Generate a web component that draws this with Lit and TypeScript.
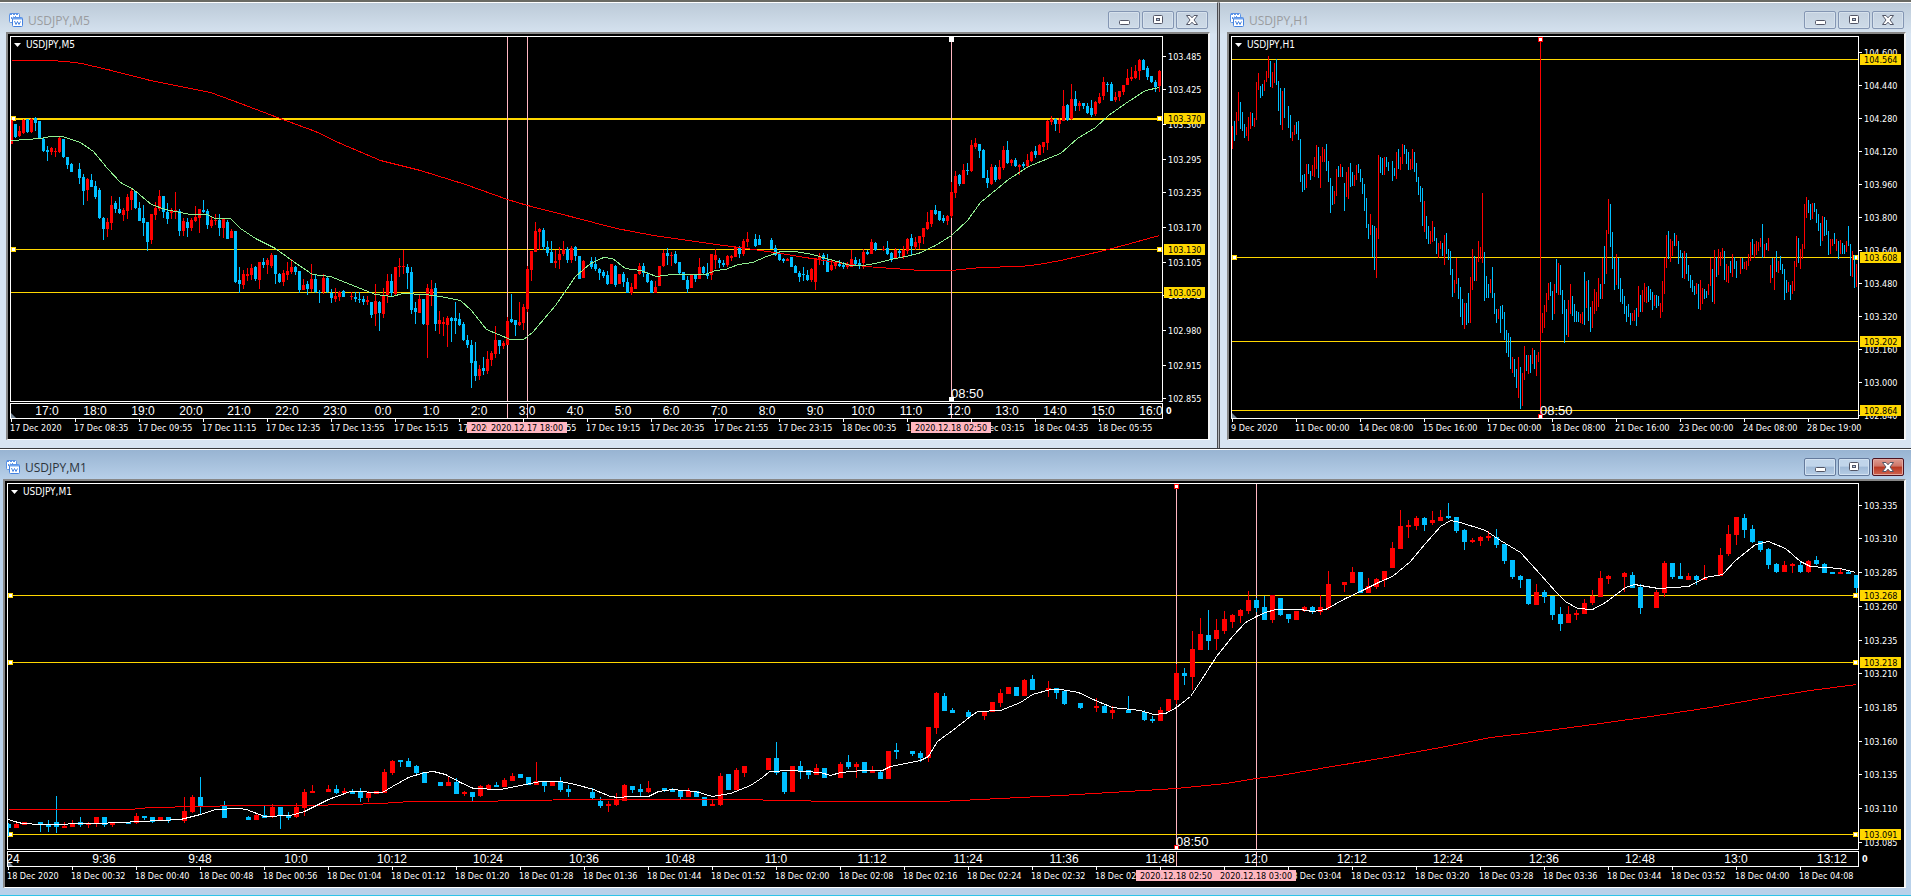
import { LitElement, html, svg, css } from "lit";
import { customElement, property } from "lit/decorators.js";
import { classMap } from "lit/directives/class-map.js";

/* ---------- price series ----------
   One entry per bar, "-" for an empty slot. The letter is the direction
   (r = up, b = down), numbers are vertical levels in thirds of a pixel. */

// colour, high, body top, body bottom, low
const M5_BARS = `
r360 360 431 431;b372 372 411 415;r378 392 408 412;r357 360 398 402;b357 358 396 398;r354 356 396 400;b350 354 370 392;b362 362 417 418;
b415 416 453 455;b438 450 456 483;r440 444 456 465;r444 453 457 471;r408 413 456 459;b417 417 471 473;b470 471 495 507;b489 492 515 516;
-;b489 507 534 552;b522 530 573 614;r534 537 570 603;b522 540 560 561;b543 558 592 597;b564 570 654 656;b651 654 687 720;
r654 666 687 711;r588 615 668 690;b603 609 627 639;b591 627 640 642;r624 630 645 663;r582 591 634 656;r567 573 600 630;b573 573 624 626;
b606 624 663 663;b615 654 668 708;b666 666 726 753;r642 642 720 732;r606 624 645 660;r570 588 628 633;b588 588 635 654;b609 635 657 672;
r624 630 638 656;r576 630 634 656;b627 633 693 708;r654 663 694 708;b654 666 684 711;r654 660 684 693;r618 650 663 667;r628 628 655 699;
b600 630 636 640;b627 633 676 687;r651 660 678 684;r642 660 664 675;b642 660 684 708;r654 657 684 713;b660 666 716 717;r687 693 713 713;
b693 693 846 848;b801 840 852 878;r810 822 855 868;r804 822 828 843;r792 803 826 840;b798 801 837 843;r786 786 840 867;b774 786 794 804;
r774 780 796 822;r760 765 798 804;b765 765 822 852;b819 822 846 848;r810 819 846 858;r786 813 824 840;r777 800 816 822;b798 800 816 826;
b813 813 870 880;r836 855 870 870;b843 852 867 885;r792 837 867 876;b822 837 876 880;b870 876 880 909;r822 834 876 882;b828 834 876 880;
b866 880 894 909;r864 888 897 906;r873 876 892 903;b870 873 890 892;-;r876 888 892 900;b876 891 896 906;b876 896 900 909;
b888 898 906 915;r888 900 906 915;b906 906 945 954;r852 903 942 978;b903 906 938 993;r864 885 942 954;r822 843 885 909;b822 843 878 888;
r801 801 882 888;r774 798 802 832;r750 798 801 822;b792 800 820 868;b801 816 930 942;b906 924 936 972;r885 897 938 938;b897 897 972 975;
r852 864 974 1074;r840 868 885 918;b850 864 972 993;r933 960 972 1001;r951 966 972 1008;r948 954 974 1041;b951 954 963 1026;b906 954 964 1002;
b939 957 974 978;b966 972 1020 1024;b1005 1020 1035 1044;b1020 1035 1089 1164;b1026 1083 1128 1143;r1095 1107 1128 1140;b1071 1104 1113 1125;r1053 1077 1113 1122;
r1053 1059 1080 1098;r978 1020 1062 1074;b1020 1020 1038 1062;r1023 1029 1038 1047;r951 963 1035 1035;b882 957 966 969;b960 960 975 1008;r906 966 975 978;
r912 921 969 990;r798 807 927 936;r753 753 810 843;r666 693 756 756;r684 687 695 750;b684 690 741 750;b723 741 759 768;b723 756 789 789;
r750 783 789 804;r741 762 780 806;r723 747 763 768;b741 747 780 790;r739 744 780 789;b738 740 768 783;b768 768 836 836;r780 783 833 833;
-;b771 783 801 808;b771 792 807 812;b803 807 819 840;b810 816 828 834;b813 825 852 855;r792 792 852 852;b795 798 855 861;
r822 822 851 851;b816 822 846 860;b834 846 879 880;r850 861 879 885;r822 822 867 868;r789 798 822 824;b789 798 820 831;b816 822 846 850;
b840 843 878 880;r843 861 880 880;r798 798 858 858;r750 759 798 802;b744 759 768 796;r756 765 769 798;b753 762 790 792;b786 786 820 822;
b816 816 840 840;b828 840 867 880;r822 825 864 864;b822 825 837 846;r774 801 837 837;b798 801 820 822;b789 819 828 837;r762 762 824 840;
r747 765 780 807;b774 780 790 804;b780 790 796 801;r765 768 796 801;r765 768 773 783;r738 742 771 771;b738 742 762 774;r717 723 762 768;
r696 717 725 742;-;b702 717 738 740;b705 717 735 735;-;-;b714 720 746 748;b735 744 765 768;
b752 759 780 783;b774 777 783 790;r774 777 784 784;b771 771 800 801;b795 798 818 820;b813 820 830 846;b800 822 826 843;b810 824 840 843;
r804 807 840 846;r774 774 846 870;r759 770 777 795;b759 765 778 795;b762 780 815 816;r780 795 810 812;r787 789 798 807;b780 793 798 800;
b786 794 802 808;r786 792 802 808;r750 777 800 801;b771 780 792 796;b777 788 798 808;r747 755 790 806;b750 755 763 766;r717 726 762 763;
b726 729 750 752;-;r738 748 750 754;b723 745 762 766;b757 759 776 786;r744 750 773 776;b747 753 760 775;r739 750 771 776;
r715 717 754 762;b702 714 738 765;r710 726 742 750;r708 708 730 748;r684 684 711 732;r636 666 687 690;r630 630 672 681;b615 630 642 645;
b633 633 660 662;b645 654 663 669;r645 648 663 675;r546 576 648 654;r513 528 578 594;b522 526 552 558;r492 510 552 552;b489 510 514 525;
r420 435 513 516;r414 429 441 447;b432 432 453 474;b447 450 533 534;b510 534 549 564;r492 501 552 555;b495 501 540 546;r480 501 537 540;
r438 450 504 510;b423 450 489 492;r477 480 489 498;b474 480 498 501;r492 495 501 525;b486 493 498 504;r462 480 498 500;r454 456 483 486;
b438 453 465 474;r432 435 465 465;r426 426 441 459;r360 363 430 450;r348 357 366 376;b354 357 372 393;r354 360 372 399;r270 318 362 363;
b312 315 360 363;r252 297 357 360;b273 297 318 333;r303 309 318 333;b309 309 318 327;b309 318 340 342;b300 324 345 351;r303 306 342 348;
r279 291 309 312;r231 246 288 300;b246 252 256 276;b246 252 303 303;r276 291 300 306;r273 273 291 303;r255 255 276 285;r207 234 255 255;
r201 231 237 243;r195 213 234 237;r177 180 213 240;b177 180 210 210;b198 204 231 240;b228 228 247 249;b240 246 262 276;r210 213 258 276`;

// colour, high, low
const H1_BARS = `
r288 356;b273 332;r246 315;r186 273;b216 297;b246 303;b282 323;r291 318;r261 332;r246 297;b249 288;r264 291;r156 270;r129 180;b168 204;b162 198;
r150 182;r123 156;r78 144;b93 171;r126 174;r99 159;b87 165;b153 243;b174 285;r183 300;b174 264;-;b228 294;b255 324;r306 333;r285 315;
b276 312;b273 330;b327 456;b435 486;b432 480;r402 474;b402 432;b423 450;r405 438;r381 441;r345 417;b351 444;r378 474;r351 396;r357 396;b342 423;
b393 456;b444 549;b468 525;r483 522;r417 498;b408 441;r402 441;b411 441;b459 543;r426 501;r411 507;b399 471;b426 468;r435 468;r405 450;b402 429;
b417 456;b444 492;b462 543;b504 594;b582 627;r552 615;b585 681;b588 720;r594 744;r375 627;b381 429;b384 435;r381 435;b381 411;b396 423;-;
b393 453;b414 438;r366 447;b357 417;r381 420;r342 402;b345 372;b357 402;b366 420;r387 420;r357 417;b366 426;b399 456;b441 495;b468 516;b474 588;
r513 606;b558 627;b588 642;r603 642;r573 636;b591 633;b624 672;r639 684;r633 657;b639 678;r615 705;b609 672;b657 690;b663 735;b717 801;r750 789;
r684 762;b744 807;b771 861;b807 885;r819 897;b819 885;b789 879;r741 879;r657 780;b678 753;r684 753;r633 696;r651 687;r489 699;b666 813;b738 804;
b762 804;r747 789;b711 804;b789 852;b837 879;r837 867;b828 909;b825 867;b846 930;b900 969;b909 981;b921 1017;r981 1029;b987 1041;b1017 1074;r981 1104;
b1011 1137;r1029 1128;r948 1050;b975 1023;r975 1032;b975 1029;r954 1002;b960 1017;r975 1038;r966 996;-;r849 909;r825 894;r789 846;r759 810;b756 798;
b783 870;r762 852;b687 789;r699 795;b705 795;b780 852;b810 939;b837 915;r810 921;r762 852;b798 858;b822 876;b843 876;b846 876;r852 879;r846 882;
b726 885;r753 834;b750 873;b831 906;r813 894;r777 852;r786 843;r744 831;b762 807;r684 807;b648 762;r600 732;r507 612;b522 651;b606 717;b684 780;
r672 765;b684 777;b744 816;b777 822;b798 852;b828 876;b822 861;b849 885;r849 873;r840 873;b834 888;r768 861;b795 846;r780 846;r759 816;r771 819;
b768 816;b777 810;b786 840;r795 828;b795 834;b798 828;r819 864;r753 846;r684 792;r615 714;b603 687;r627 696;r633 678;b609 648;r615 648;b633 702;
b660 684;b669 744;r663 747;b669 732;b705 753;b735 774;b750 786;b768 795;r759 792;b762 837;r750 840;r774 822;b777 807;b783 804;r762 795;r684 768;
b717 816;r660 822;b681 741;r657 735;r666 708;r654 687;b663 750;r702 756;r708 759;b693 729;r672 741;b681 717;b693 744;-;r684 732;b684 717;
r696 717;r693 720;r672 708;r636 693;b627 675;r642 684;r633 675;r636 663;r624 651;b582 684;r642 681;b639 660;r624 663;r705 759;b684 744;r684 780;
b663 726;r693 729;b678 720;b702 732;b717 810;b750 789;r756 786;b765 810;r753 792;r693 783;r618 711;b624 699;r657 717;r642 687;r522 657;r501 564;
b510 549;b522 570;r519 567;b519 546;b537 579;b552 603;b579 648;r558 633;b561 618;b570 615;b603 675;r627 672;r627 648;b609 642;r627 663;b633 687;
r630 672;b639 672;b645 672;r633 666;b588 648;b642 738;r663 741;b675 774;r702 771`;

const M1_BARS = `
b1150 1152 1164 1188;r1148 1152 1163 1163;r1147 1147 1155 1155;-;b1147 1147 1154 1176;b1140 1152 1160 1176;b1068 1147 1160 1179;r1147 1157 1163 1163;
r1140 1149 1160 1160;b1131 1146 1154 1160;r1147 1149 1156 1163;r1131 1131 1152 1162;b1131 1131 1156 1160;r1149 1149 1156 1160;-;b1146 1146 1152 1152;
r1119 1128 1149 1151;b1128 1128 1134 1139;b1130 1131 1145 1149;r1131 1131 1142 1143;b1131 1131 1143 1148;-;r1071 1113 1144 1149;r1065 1071 1116 1119;
b1011 1071 1098 1121;-;-;b1083 1095 1133 1134;-;-;b1128 1131 1140 1140;r1119 1125 1140 1140;
b1095 1125 1133 1133;r1092 1101 1131 1134;b1101 1101 1128 1167;b1116 1128 1134 1139;r1089 1101 1131 1134;r1047 1056 1104 1128;r1035 1053 1059 1059;-;
r1035 1047 1056 1056;b1035 1047 1059 1062;r1045 1053 1059 1060;b1046 1053 1061 1062;b1045 1053 1074 1086;r1053 1059 1074 1085;r1053 1053 1061 1061;r987 996 1059 1059;
r960 963 999 1005;b960 960 966 981;b954 963 981 982;b975 978 999 1003;b996 996 1029 1029;-;b1026 1026 1038 1038;r1011 1026 1037 1037;
b1013 1026 1062 1062;r1053 1056 1061 1068;b1056 1056 1071 1083;r1036 1038 1068 1071;r1031 1035 1047 1048;b1026 1035 1041 1042;r1013 1019 1041 1041;r998 1008 1023 1023;
b1002 1002 1014 1014;b1011 1011 1035 1036;r966 1023 1036 1036;b1023 1025 1038 1056;r1023 1026 1038 1038;b1011 1026 1050 1056;b1035 1047 1056 1071;-;
-;b1043 1056 1074 1080;b1071 1083 1098 1104;r1083 1092 1098 1116;r1059 1077 1096 1098;r1032 1035 1083 1084;b1038 1038 1050 1059;b1032 1047 1056 1068;
r1023 1044 1056 1059;-;b1044 1044 1050 1055;b1043 1047 1055 1056;b1050 1050 1071 1080;r1044 1053 1071 1071;b1053 1053 1071 1071;b1071 1071 1098 1098;
r1080 1092 1098 1098;r999 1008 1095 1098;b1002 1002 1050 1050;r984 990 1050 1050;r978 978 999 1011;-;-;r954 954 990 990;
b906 954 999 1005;b996 996 1056 1062;r978 978 1056 1056;b963 978 993 1017;b990 990 1004 1017;r971 984 1005 1005;b984 984 1014 1014;-;
r966 972 1014 1014;b945 966 981 987;r966 972 981 1014;b966 966 999 999;r978 990 999 999;b990 996 1017 1017;r933 933 1017 1017;b909 930 936 957;
-;b933 933 942 948;b933 939 954 966;r861 861 954 966;r756 759 864 882;b759 768 813 813;b804 810 819 819;-;
b810 816 831 837;-;r813 813 827 840;r786 786 816 816;r747 759 789 801;r741 741 762 762;b741 741 768 768;r717 720 768 768;
b705 717 750 750;-;r723 744 750 771;b744 744 759 777;b753 753 792 795;-;b789 789 804 807;-;
r774 798 804 816;b792 798 819 819;r798 810 819 837;-;b768 810 819 819;-;b810 816 840 843;b828 837 843 849;
r801 810 843 843;r777 777 813 813;r672 699 780 792;b684 699 708 735;r573 627 711 750;r534 582 630 630;b510 585 603 630;r537 570 597 630;
r513 537 573 582;r522 525 546 564;r507 510 528 549;r453 480 513 522;b474 480 504 516;b468 501 540 540;r465 465 540 549;b474 474 525 528;
b522 522 537 549;r513 513 540 540;r498 501 513 516;b498 501 516 522;r465 501 516 525;r393 432 504 510;-;r426 426 435 456;
r381 396 429 429;b396 396 459 459;r414 438 459 459;r414 417 441 447;r393 393 420 441;r306 324 384 384;r210 258 327 327;r240 255 261 294;
r228 234 258 270;b231 234 255 273;r213 240 249 255;r210 231 243 243;b189 228 234 237;b231 231 273 279;b267 270 306 330;r294 300 306 309;
r288 291 303 318;r273 288 294 303;b267 291 315 324;b312 312 363 372;b360 360 411 417;b405 408 420 444;b417 417 492 495;r432 456 495 495;
b450 456 471 489;b468 468 525 540;b501 522 552 573;r498 522 549 549;r510 519 525 540;r477 489 522 522;r450 468 489 495;r393 414 471 471;
r405 408 417 432;-;r396 399 411 456;b396 405 444 444;b432 441 504 522;-;r450 456 504 504;r363 369 459 471;
b369 369 411 417;b369 408 417 417;r399 408 420 420;b405 408 420 435;r375 414 420 420;-;r324 345 408 408;r255 282 342 348;
r231 231 285 315;b222 234 270 294;b255 267 306 309;b303 303 330 336;b324 327 375 387;b369 372 396 399;r363 375 396 396;r369 372 378 399;
b363 375 396 399;r360 363 396 399;b348 360 372 375;b369 372 399 399;b396 396 402 402;r387 396 402 402;b393 396 402 402;b405 405 444 459`;

/* ---------- moving averages: "x:level" ---------- */
const M5_SLOW = "11:181 49:182 66:185 81:191 107:209 150:240 210:277 232:300 277:353 315:395 340:430 380:482 420:510 465:552 507:597 527:615 570:648 616:684 653:705 716:734 760:750 780:760 836:787 865:799 920:810 951:810 980:803 1020:800 1038:793 1060:780 1104:750 1130:731 1159:706";
const M5_FAST = "11:422 40:416 50:410 62:410 80:428 93:455 107:505 120:548 133:568 151:613 165:628 190:642 206:643 215:655 230:656 240:684 255:715 275:745 290:778 312:822 330:830 350:852 375:884 392:888 402:880 425:884 440:888 460:902 471:932 486:987 510:1017 523:1017 532:997 555:915 575:830 590:790 603:772 612:776 625:805 640:812 656:828 672:822 705:822 715:812 725:808 738:793 752:786 766:770 780:754 795:754 812:764 840:786 850:795 862:796 875:790 890:778 905:770 918:760 935:735 951:705 967:660 980:608 1008:537 1028:498 1060:460 1077:415 1095:382 1108:345 1125:310 1145:272 1159:261";
const M1_SLOW = "8:1108 130:1108 150:1103 200:1099 240:1096 310:1096 380:1090 410:1084 470:1083 580:1077 618:1077 745:1079 780:1081 840:1083 940:1083 980:1079 1060:1067 1110:1057 1176:1045 1225:1030 1256:1014 1280:1005 1320:986 1380:956 1440:922 1490:893 1540:874 1600:850 1650:828 1710:802 1760:775 1810:752 1856:733";
const M1_FAST = "8:1137 14:1144 22:1150 40:1154 95:1151 120:1147 140:1144 160:1142 180:1137 200:1122 215:1108 238:1104 246:1109 264:1129 290:1126 304:1114 328:1079 350:1055 382:1056 392:1038 408:1012 424:997 433:994 445:1002 460:1028 473:1045 500:1047 520:1035 540:1025 560:1024 575:1034 593:1047 610:1068 618:1071 630:1069 648:1068 658:1055 672:1048 695:1055 712:1068 730:1060 750:1035 762:1012 769:994 790:991 820:997 830:1006 840:996 862:991 882:990 890:979 920:960 928:948 937:903 952:870 970:830 977:813 1000:810 1020:788 1032:764 1050:748 1060:748 1078:758 1095:782 1112:801 1140:810 1153:823 1165:820 1176:803 1190:770 1200:725 1216:650 1232:590 1245:548 1256:530 1265:518 1275:509 1300:509 1312:515 1325:509 1345:474 1360:453 1380:425 1392:408 1410:365 1425:310 1440:258 1450:242 1460:248 1485:270 1500:300 1520:338 1540:404 1555:455 1565:484 1577:504 1592:508 1605:488 1625:442 1634:432 1658:444 1688:440 1705:411 1722:402 1735:360 1755:313 1768:303 1785:325 1800:364 1810:378 1840:384 1855:396";

interface Level { price: number; thick?: boolean; handles?: boolean }
interface Mark { x: number; tag?: string; color: string; grip?: string; note?: string }
interface ChartSpec {
  symbol: string;
  bars: string; firstX: number; step: number; body: number; base: number;
  box: { x: number; y: number; w: number; h: number };
  scale: { price: number; y: number; perUnit: number };
  prices: string[]; levels: Level[]; marks: Mark[];
  averages: { color: string; points: string }[];
  clock?: { firstX: number; step: number; labels: string[] };
  dates: string[];
}

const PINK = "#ffb6c1", RED = "#f00", SKY = "#00bfff", GOLD = "#ffd700";
const pad = (n: number) => String(n).padStart(2, "0");
const M1_TIMES = Array.from({ length: 28 }, (_, k) => {
  const t = 32 + 8 * k;
  return `18 Dec ${pad(Math.floor(t / 60))}:${pad(t % 60)}`;
});

const M5: ChartSpec = {
  symbol: "USDJPY,M5",
  bars: M5_BARS, firstX: 11, step: 4, body: 3, base: 0,
  box: { x: 10, y: 36, w: 1153, h: 366 },
  scale: { price: 103.485, y: 56.5, perUnit: 542.5 },
  prices: ["103.485", "103.425", "103.360", "103.295", "103.235", "103.170", "103.105", "103.045", "102.980", "102.915", "102.855"],
  levels: [{ price: 103.37, thick: true, handles: true }, { price: 103.13, handles: true }, { price: 103.05 }],
  marks: [
    { x: 507, color: PINK, tag: "2020.12.17 17:35" },
    { x: 527, color: PINK, tag: "2020.12.17 18:00" },
    { x: 951, color: PINK, tag: "2020.12.18 02:50", grip: "#fff", note: "08:50" },
  ],
  averages: [{ color: RED, points: M5_SLOW }, { color: "#90ee90", points: M5_FAST }],
  clock: { firstX: 47, step: 48, labels: Array.from({ length: 24 }, (_, k) => `${(17 + k) % 24}:0`) },
  dates: ["17 Dec 2020", "17 Dec 08:35", "17 Dec 09:55", "17 Dec 11:15", "17 Dec 12:35", "17 Dec 13:55", "17 Dec 15:15", "17 Dec 16:35", "17 Dec 17:55",
    "17 Dec 19:15", "17 Dec 20:35", "17 Dec 21:55", "17 Dec 23:15", "18 Dec 00:35", "18 Dec 01:55", "18 Dec 03:15", "18 Dec 04:35", "18 Dec 05:55"],
};

const H1: ChartSpec = {
  symbol: "USDJPY,H1",
  bars: H1_BARS, firstX: 1232, step: 2, body: 1, base: 30,
  box: { x: 1231, y: 36, w: 628, h: 383 },
  scale: { price: 104.6, y: 52.5, perUnit: 206.5 },
  prices: ["104.600", "104.440", "104.280", "104.120", "103.960", "103.800", "103.640", "103.480", "103.320", "103.160", "103.000", "102.840"],
  levels: [{ price: 104.564 }, { price: 103.608, handles: true }, { price: 103.202 }, { price: 102.864 }],
  marks: [{ x: 1540, color: RED, grip: RED, note: "08:50" }],
  averages: [],
  dates: ["9 Dec 2020", "11 Dec 00:00", "14 Dec 08:00", "15 Dec 16:00", "17 Dec 00:00", "18 Dec 08:00", "21 Dec 16:00", "23 Dec 00:00", "24 Dec 08:00", "28 Dec 19:00"],
};

const M1: ChartSpec = {
  symbol: "USDJPY,M1",
  bars: M1_BARS, firstX: 8, step: 8, body: 5, base: 440,
  box: { x: 7, y: 483, w: 1852, h: 367 },
  scale: { price: 103.335, y: 505.2, perUnit: 1348.5 },
  prices: ["103.335", "103.310", "103.285", "103.260", "103.235", "103.210", "103.185", "103.160", "103.135", "103.110", "103.085"],
  levels: [{ price: 103.268, handles: true }, { price: 103.218, handles: true }, { price: 103.091, handles: true }],
  marks: [
    { x: 1176, color: PINK, tag: "2020.12.18 02:50", grip: RED, note: "08:50" },
    { x: 1256, color: PINK, tag: "2020.12.18 03:00" },
  ],
  averages: [{ color: RED, points: M1_SLOW }, { color: "#fff", points: M1_FAST }],
  clock: {
    firstX: 8, step: 96,
    labels: Array.from({ length: 20 }, (_, k) => { const t = 564 + 12 * k; return `${Math.floor(t / 60)}:${t % 60}`; }),
  },
  dates: ["18 Dec 2020", ...M1_TIMES],
};

@customElement("chart-pane")
export class ChartPane extends LitElement {
  @property({ attribute: false }) spec!: ChartSpec;

  static styles = css`
    :host { display: block; min-height: 0; background: #000; color: #fff;
      font: 9px/11px "DejaVu Sans Condensed", "Noto Sans", sans-serif; }
    .pane { display: grid; height: 100%; box-sizing: border-box; padding: 2px 0 0 2px;
      grid-template-columns: minmax(0, 1fr) 45px; grid-template-rows: minmax(0, 1fr) 20px; }
    .pane.clocked { grid-template-rows: minmax(0, 1fr) 17px 20px; }
    .plot, .clock { position: relative; border: 1px solid #fff; overflow: hidden; min-width: 0; min-height: 0; }
    .clock { margin-top: 1px; font: 12px/14px "Liberation Sans", Arial, sans-serif; }
    .art { display: block; width: 100%; height: 100%; }
    .caption { position: absolute; left: 3px; top: 1px; display: flex; align-items: center; gap: 5px;
      font: 10px/14px "DejaVu Sans Condensed", "Noto Sans", sans-serif; }
    .corner { position: absolute; left: 0; bottom: 0; width: 5px; height: 5px; background: #778899;
      clip-path: polygon(0 0, 100% 100%, 0 100%); }
    .note { position: absolute; bottom: 0; font: 13px/14px "Liberation Sans", Arial, sans-serif; }
    .hour { position: absolute; top: 0; transform: translateX(-50%); white-space: nowrap; }
    .axis, .dates { position: relative; }
    .dates { grid-column: 1 / -1; display: grid; grid-template-columns: minmax(0, 1fr) 45px; }
    .scale { position: relative; }
    .price { position: absolute; left: 0; margin-top: -6px; width: 45px; height: 11px; line-height: 12px; padding-left: 5px; box-sizing: border-box; }
    .price::before { content: ""; position: absolute; left: 0; top: 5px; width: 3px; height: 1px; background: #fff; }
    .price.tag { left: 1px; width: 41px; padding-left: 4px; background: #ffd700; color: #000; }
    .price.tag::before { display: none; }
    .zero { padding: 4px 0 0 3px; font-weight: 700; }
    .date { position: absolute; top: 0; padding-top: 4px; white-space: nowrap; }
    .date::before { content: ""; position: absolute; left: 1px; top: 0; width: 1px; height: 3px; background: #fff; }
    .stamp { position: absolute; top: 3px; width: 80px; height: 11px; line-height: 12px; transform: translateX(-50%);
      background: #ffb6c1; color: #000; text-align: center; white-space: nowrap; }
  `;

  private px(x: number) { return `${((x - this.spec.box.x) / this.spec.box.w) * 100}%`; }
  private innerPx(x: number) { return `${((x - this.spec.box.x - 1) / (this.spec.box.w - 2)) * 100}%`; }
  private yOf(price: number) { const s = this.spec.scale; return s.y + (s.price - price) * s.perUnit; }
  private py(price: number) {
    const b = this.spec.box;
    return `${((Math.floor(this.yOf(price)) + 1 - b.y) / b.h) * 100}%`;
  }

  /** One path per direction keeps the DOM small. */
  private barPath(dir: string) {
    const { bars, firstX, step, body, base } = this.spec;
    const half = (body - 1) / 2;
    let d = "";
    bars.trim().split(";").forEach((entry, i) => {
      const e = entry.trim();
      if (e[0] !== dir) return;
      const v = e.slice(1).split(" ").map(n => base + Math.round(Number(n) / 3));
      const x = firstX + i * step;
      const high = v[0], low = v[v.length - 1];
      d += `M${x} ${high}h1V${Math.max(low, high + 1)}h-1z`;
      if (v.length === 4) d += `M${x - half} ${v[1]}h${body}V${Math.max(v[2], v[1] + 1)}h${-body}z`;
    });
    return d;
  }

  /** Points sit on pixel centres so that flat runs stay one pixel thick. */
  private average(points: string) {
    return points.split(" ").map(p => {
      const [x, y] = p.split(":").map(Number);
      return `${x + 0.5},${this.spec.base + Math.floor(y / 3) + 0.5}`;
    }).join(" ");
  }

  private grip(x: number, y: number, color: string) {
    return svg`<rect x=${x} y=${y} width="5" height="5" fill=${color}/><rect x=${x + 1} y=${y + 1} width="3" height="3" fill="#fff"/>`;
  }

  render() {
    const s = this.spec, b = s.box, right = b.x + b.w - 1, bottom = b.y + b.h - 1;
    return html`
      <div class=${classMap({ pane: true, clocked: !!s.clock })}>
        <div class="plot">
          <svg class="art" viewBox="${b.x + 1} ${b.y + 1} ${b.w - 2} ${b.h - 2}" preserveAspectRatio="none" shape-rendering="crispEdges" role="img" aria-label="${s.symbol} chart">
            ${s.levels.map(l => svg`<rect x=${b.x} y=${Math.floor(this.yOf(l.price))} width=${b.w} height=${l.thick ? 2 : 1} fill=${GOLD}/>`)}
            ${s.marks.map(m => svg`<rect x=${m.x} y=${b.y} width="1" height=${b.h} fill=${m.color}/>`)}
            ${s.levels.filter(l => l.handles).map(l => {
              const y = Math.floor(this.yOf(l.price)) - 2;
              return svg`${this.grip(b.x + 1, y, GOLD)}${this.grip(right - 5, y, GOLD)}`;
            })}
            <path d=${this.barPath("r")} fill=${RED}></path>
            <path d=${this.barPath("b")} fill=${SKY}></path>
            ${s.averages.map(a => svg`<polyline points=${this.average(a.points)} fill="none" stroke=${a.color} stroke-width="1"/>`)}
            ${s.marks.filter(m => m.grip).map(m => svg`${this.grip(m.x - 2, b.y + 1, m.grip!)}${this.grip(m.x - 2, bottom - 4, m.grip!)}`)}
          </svg>
          <div class="caption">
            <svg width="7" height="4" viewBox="0 0 7 4" aria-hidden="true"><path d="M0 0h7L3.500 4z" fill="#fff"/></svg>
            <span>${s.symbol}</span>
          </div>
          ${s.marks.filter(m => m.note).map(m => html`<span class="note" style="left:${this.innerPx(m.x)}">${m.note}</span>`)}
          ${s.clock ? "" : html`<i class="corner"></i>`}
        </div>
        <div class="axis">
          ${s.prices.map(p => html`<span class="price" style="top:${this.py(Number(p))}">${p}</span>`)}
          ${s.levels.map(l => html`<span class="price tag" style="top:${this.py(l.price)}">${l.price.toFixed(3)}</span>`)}
        </div>
        ${s.clock ? html`
          <div class="clock">
            <i class="corner"></i>
            <svg class="art" viewBox="${b.x + 1} 0 ${b.w - 2} 14" preserveAspectRatio="none" shape-rendering="crispEdges" aria-hidden="true">
              ${s.marks.map(m => svg`<rect x=${m.x} y="0" width="1" height="14" fill=${m.color}/>`)}
            </svg>
            ${s.clock.labels.map((t, k) => html`<span class="hour" style="left:${this.innerPx(s.clock!.firstX + k * s.clock!.step)}">${t}</span>`)}
          </div>
          <div class="zero">0</div>` : ""}
        <div class="dates">
          <div class="scale">
            ${s.dates.map((t, k) => html`<span class="date" style="left:${this.px(s.firstX - 1 + k * 64)}">${t}</span>`)}
            ${s.marks.filter(m => m.tag).map(m => html`<span class="stamp" style="left:${this.px(m.x)}">${m.tag}</span>`)}
          </div>
        </div>
      </div>`;
  }
}

@customElement("chart-window")
export class ChartWindow extends LitElement {
  @property({ attribute: false }) spec!: ChartSpec;
  @property({ type: Boolean, reflect: true }) active = false;

  static styles = css`
    :host { display: flex; flex-direction: column; box-sizing: border-box; min-width: 0; min-height: 0;
      border-top: 1px solid #fff; padding: 0 5px 8px 6px;
      background: linear-gradient(#bccad8, #d5e2ef 30px, #d7e4f2 31px); }
    :host([active]) { padding: 0 5px 7px 3px; background: linear-gradient(#98b4d2, #b8d0e9 30px, #b9d1ea 31px); }
    .bar { display: flex; align-items: center; height: 29px; box-sizing: border-box; padding: 8px 2px 3px 3px; gap: 5px; }
    .name { flex: 1; padding-top: 1px; font: 12px/18px "Open Sans", "Noto Sans", sans-serif; color: #9a9c9f; }
    :host([active]) .name { color: #2c333b; }
    .tools { display: flex; gap: 2px; }
    .tool { display: grid; place-items: center; width: 32px; height: 18px; padding: 0; box-sizing: border-box;
      border: 1px solid #8496b3; border-radius: 2px; box-shadow: inset 0 0 0 1px #d6e1ec;
      background: linear-gradient(#c4d1df, #cedbe8); }
    :host([active]) .tool { border-color: #647a9c; box-shadow: inset 0 0 0 1px #d3e2f1;
      background: linear-gradient(#c1d5ea 45%, #a0bad7 50%, #b7cde5); }
    :host([active]) .tool.close { border-color: #4c1220; box-shadow: inset 0 0 0 1px #e3a99f;
      background: linear-gradient(#dc9c92, #cf7466 45%, #b93721 50%, #cf6450); }
    .client { flex: 1; display: flex; flex-direction: column; border: 2px solid; border-width: 2px 2px 1px 2px;
      border-color: #878787 #f4f4f4 #fff #878787; min-height: 0; }
    chart-pane { flex: 1; }
  `;

  render() {
    return html`
      <header class="bar">
        <svg width="14" height="14" viewBox="0 0 14 14" aria-hidden="true">
          <rect x=".5" y=".5" width="10" height="9" rx="1" fill="#fff" stroke="#5b92e5"/>
          <path d="M1 1h9" stroke="#5b92e5" stroke-width="2" stroke-dasharray="2 1"/>
          <path d="M2.500 6V4M4.500 5V3.500M6.500 4V3" stroke="#5b92e5"/>
          <rect x="3.500" y="4.500" width="10" height="9" rx="1" fill="#fff" stroke="#4482e0"/>
          <path d="M4 5.500h9" stroke="#6fa3ee" stroke-width="2"/>
          <path d="M5.500 8L7 11.500L8.500 8.500L10 11.500L11.500 8.500" fill="none" stroke="#4482e0"/>
        </svg>
        <span class="name">${this.spec.symbol}</span>
        <div class="tools">
          <button class="tool" aria-label="Minimize">
            <svg width="12" height="12" viewBox="0 0 12 12"><rect x="1.500" y="6.500" width="10" height="4" rx="1" fill="#fff" stroke="#535666"/></svg>
          </button>
          <button class="tool" aria-label="Restore">
            <svg width="12" height="12" viewBox="0 0 12 12"><rect x="1.500" y="1.500" width="9" height="8" rx="1" fill="#fff" stroke="#535666"/><rect x="4.500" y="4.500" width="3" height="2" fill="#b7cde5" stroke="#535666"/></svg>
          </button>
          <button class="tool close" aria-label="Close">
            <svg width="12" height="12" viewBox="0 0 12 12"><path d="M.5 1.500h3.500L6 3.800L8 1.500h3.500L8 6l3.500 4.500H8L6 8.200L4 10.500H.5L4 6z" fill="#fff" stroke="#535666"/></svg>
          </button>
        </div>
      </header>
      <div class="client"><chart-pane .spec=${this.spec}></chart-pane></div>`;
  }
}

@customElement("app-root")
export class AppRoot extends LitElement {
  static styles = css`
    :host { display: grid; height: 100vh; box-sizing: border-box; overflow: hidden; background: #6a6a64;
      grid-template-rows: minmax(0, 449fr) minmax(0, 447fr); }
    .top { display: grid; grid-template-columns: minmax(0, 1218fr) minmax(0, 692fr); column-gap: 1px; padding-top: 2px;
      border-bottom: 1px solid #37393d; min-height: 0; background: linear-gradient(#6a6a64 2px, #b4b6ba 2px); }
    .left { padding-right: 7px; border-right: 1px solid #4a4b50; }
    .side { padding-left: 7px; border-left: 1px solid #4a4b50; }
    .bottom { border-bottom: 1px solid #2fc3e8; }
  `;

  render() {
    return html`
      <div class="top">
        <chart-window class="left" .spec=${M5}></chart-window>
        <chart-window class="side" .spec=${H1}></chart-window>
      </div>
      <chart-window class="bottom" active .spec=${M1}></chart-window>`;
  }
}
